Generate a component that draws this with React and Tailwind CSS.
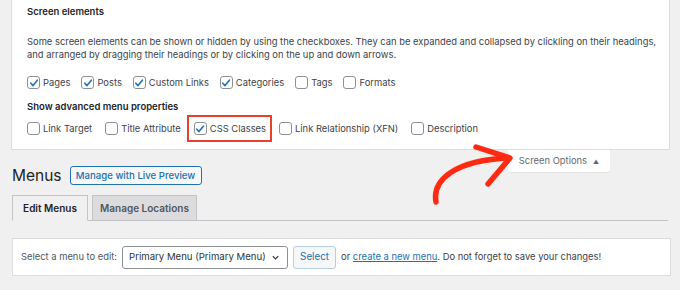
import React from 'react';

const Check = ({ checked }) => (
  <span className="flex h-[13px] w-[13px] shrink-0 items-center justify-center rounded-[3px] border border-[#8c8f94] bg-white">
    {checked && (
      <svg width="10" height="10" viewBox="0 0 10 10">
        <polyline points="1.8,5.2 4,7.6 8.4,2.2" fill="none" stroke="#2271b1" strokeWidth="1.6" strokeLinecap="round" strokeLinejoin="round" />
      </svg>
    )}
  </span>
);

const Option = ({ label, checked, highlight }) => (
  <label className="relative flex items-center gap-[3px]">
    <Check checked={checked} />
    <span>{label}</span>
    {highlight && (
      <span className="pointer-events-none absolute -left-[7px] -right-[6px] -top-[7px] -bottom-[6px] border-2 border-[#e8402c]" />
    )}
  </label>
);

const screenItems = [
  { label: 'Pages', checked: true },
  { label: 'Posts', checked: true },
  { label: 'Custom Links', checked: true },
  { label: 'Categories', checked: true },
  { label: 'Tags', checked: false },
  { label: 'Formats', checked: false },
];

const advancedItems = [
  { label: 'Link Target' },
  { label: 'Title Attribute' },
  { label: 'CSS Classes', checked: true, highlight: true },
  { label: 'Link Relationship (XFN)' },
  { label: 'Description' },
];

export default function App() {
  return (
    <div className="relative h-[290px] w-[680px] overflow-hidden bg-[#f0f0f1] text-[9.4px] text-[#3c434a]" style={{ fontFamily: 'Inter, "Noto Sans", sans-serif' }}>
      {/* Screen options panel */}
      <div className="ml-[11px] mr-[10px] border-x border-b border-[#dcdcde] bg-white pb-[7px] pl-[15px] pr-[6px] pt-[4px]">
        <h5 className="text-[9.5px] font-semibold leading-4 text-[#1d2327]">Screen elements</h5>
        <p className="mt-[15px] leading-[13px]">
          Some screen elements can be shown or hidden by using the checkboxes. They can be expanded and collapsed by clickling on their headings, and arranged by dragging their headings or by clicking on the up and down arrows.
        </p>
        <div className="mt-[14px] flex h-4 items-center gap-[11px]">
          {screenItems.map((item) => (
            <Option key={item.label} {...item} />
          ))}
        </div>
        <h5 className="mt-[8px] text-[9.5px] font-semibold leading-4 text-[#1d2327]">Show advanced menu properties</h5>
        <div className="mt-[1px] flex h-[26px] items-center gap-[13px]">
          {advancedItems.map((item) => (
            <Option key={item.label} {...item} />
          ))}
        </div>
      </div>

      {/* Heading row with Screen Options tab */}
      <div className="flex items-start justify-between pl-[12px] pr-[70px]">
        <div className="flex items-center gap-[8px] pt-[16px]">
          <h1 className="text-[15.5px] leading-[19px] text-[#1d2327]">Menus</h1>
          <button className="h-[19px] w-[132px] rounded-[3px] border border-[#2271b1] bg-[#f6f7f7] text-[9.6px] font-medium leading-[17px] text-[#2271b1]">
            Manage with Live Preview
          </button>
        </div>
        <button className="flex h-[22px] w-[102px] items-center justify-center gap-[6px] rounded-b-[3px] bg-white text-[9.4px] text-[#646970] shadow-[0_1px_1px_rgba(0,0,0,0.06)]">
          Screen Options
          <span className="text-[6px]">▲</span>
        </button>
      </div>

      {/* Tabs */}
      <div className="mx-[12px] mt-[10px] flex h-[26px] items-end gap-[4px] border-b border-[#c3c4c7]">
        <div className="-mb-px flex h-[26px] w-[76px] items-center justify-center border border-[#c3c4c7] border-b-[#f0f0f1] bg-[#f0f0f1] text-[10px] font-semibold text-[#1d2327]">
          Edit Menus
        </div>
        <div className="-mb-px flex h-[26px] w-[105px] items-center justify-center border border-[#c3c4c7] bg-[#dcdcde] text-[10px] font-semibold text-[#50575e]">
          Manage Locations
        </div>
      </div>

      {/* Menu selector */}
      <div className="ml-[12px] mr-[9px] mt-[17px] flex h-[38px] items-center border border-[#dcdcde] bg-white pl-[8px]">
        <span className="text-[#50575e]">Select a menu to edit:</span>
        <div className="ml-[5px] flex h-[23px] w-[166px] items-center justify-between whitespace-nowrap rounded-[3px] border border-[#8c8f94] bg-white pl-[6px] pr-[7px] text-[9.6px] text-[#2c3338]">
          <span>Primary Menu (Primary Menu)</span>
          <svg width="9" height="9" viewBox="0 0 10 10">
            <polyline points="2,3.5 5,6.5 8,3.5" fill="none" stroke="#2c3338" strokeWidth="1.3" />
          </svg>
        </div>
        <button className="ml-[5px] h-[23px] w-[43px] rounded-[3px] border border-[#b7cde2] bg-[#f6f7f7] text-[9.8px] text-[#2271b1]">
          Select
        </button>
        <span className="ml-[5px]">
          or <span className="text-[#2271b1] underline">create a new menu</span>. Do not forget to save your changes!
        </span>
      </div>

      {/* Annotation arrow */}
      <svg className="pointer-events-none absolute left-0 top-0" width="680" height="290" viewBox="0 0 680 290">
        <path d="M436 202 C432 180 455 160 509 158" fill="none" stroke="#ff2a12" strokeWidth="5.5" strokeLinecap="round" />
        <path d="M476 147 L510 158 L488 184" fill="none" stroke="#ff2a12" strokeWidth="5.5" strokeLinecap="round" strokeLinejoin="round" />
      </svg>
    </div>
  );
}
